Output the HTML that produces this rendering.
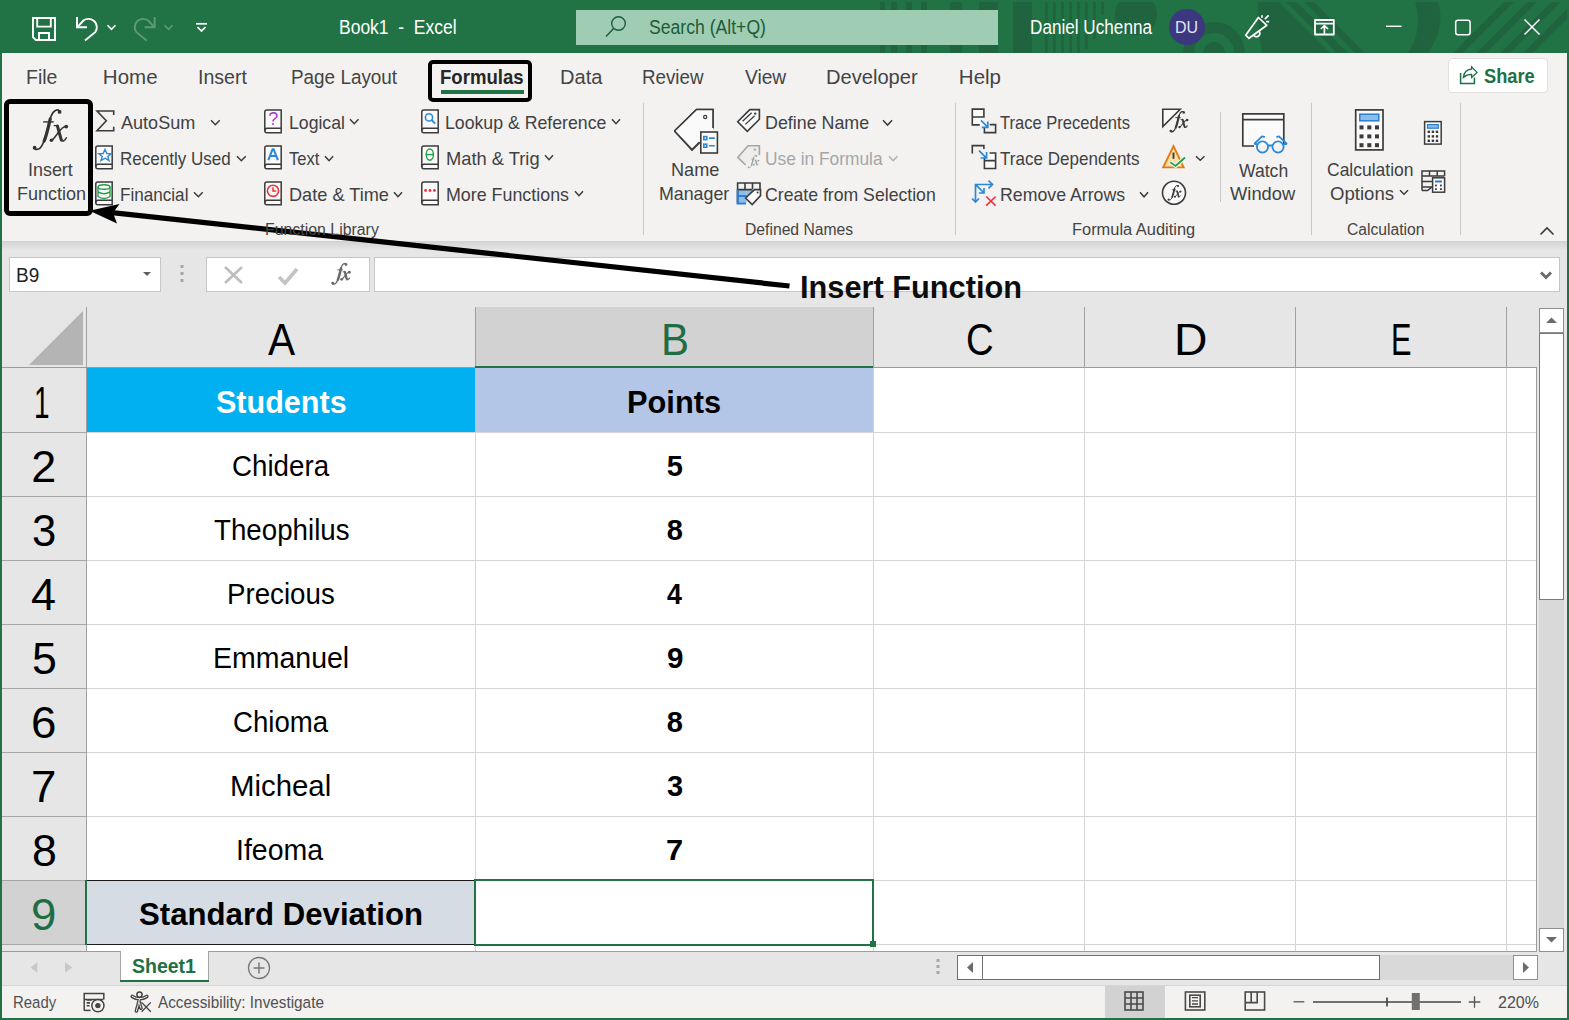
<!DOCTYPE html>
<html><head><meta charset="utf-8"><title>Excel</title><style>
html,body{margin:0;padding:0;width:1569px;height:1020px;overflow:hidden;background:#217346;position:relative}
.abs{position:absolute}
.t{position:absolute;white-space:pre;line-height:1;transform-origin:0 0}
</style></head>
<body>
<div class="abs" style="left:0;top:0;width:1569px;height:53px;background:#217346"></div>
<svg class="abs" style="left:0;top:0" width="1569" height="53" viewBox="0 0 1569 53">
<g fill="#20643f">
<rect x="880" y="2" width="5" height="51"/><rect x="891" y="2" width="6" height="51"/><rect x="906" y="2" width="6" height="51"/><rect x="921" y="2" width="6" height="51"/>
<rect x="950" y="2" width="12" height="51"/><rect x="979" y="2" width="19" height="51"/>
<rect x="1013" y="2" width="19" height="51"/>
<rect x="1045" y="2" width="2.7" height="51"/><rect x="1053" y="2" width="2.7" height="51"/><rect x="1061.2" y="2" width="2.7" height="51"/><rect x="1069.3" y="2" width="2.7" height="51"/><rect x="1077.1" y="2" width="2.7" height="51"/><rect x="1085" y="2" width="2.7" height="47"/><rect x="1093.2" y="2" width="2.7" height="37"/><rect x="1101.3" y="2" width="2.7" height="13"/>
<circle cx="1136" cy="14.5" r="21"/>
<path fill-rule="evenodd" d="M1183 53 A31 31 0 0 1 1245 53 Z M1194 53 A20 20 0 0 1 1234 53 Z"/><path d="M1203 53 A11 11 0 0 1 1225 53 Z"/>
<path d="M1258 2 L1279 2 L1330 53 L1262 53 Q1257 27 1258 2 Z" />
<path d="M1286 2 L1297 2 L1348 53 L1337 53 Z M1304 2 L1314 2 L1365 53 L1355 53 Z"/>
<path d="M1415 2 L1438 2 Q1446 27 1428 53 L1408 53 Q1424 27 1415 2 Z"/>
<path d="M1453 53 L1504 2 L1514 2 L1463 53 Z M1476 53 L1527 2 L1537 2 L1486 53 Z M1500 53 L1551 2 L1561 2 L1510 53 Z M1523 53 L1567 9 L1567 19 L1533 53 Z"/>
</g><rect x="0" y="0" width="1569" height="2" fill="#217346"/></svg>
<div class="abs" style="left:2px;top:53px;width:1565px;height:188px;background:#f3f2f1"></div>
<div class="abs" style="left:2px;top:241px;width:1565px;height:777px;background:#e6e6e6"></div>
<div class="abs" style="left:2px;top:241px;width:1565px;height:9px;background:linear-gradient(#d2d2d2,#e6e6e6)"></div>
<div class="abs" style="left:2px;top:985px;width:1565px;height:33px;background:#f3f2f1;border-top:1px solid #d6d6d6;box-sizing:border-box"></div>
<div class="abs" style="left:9px;top:257px;width:152px;height:35px;background:#fff;border:1px solid #c6c6c6;box-sizing:border-box"></div>
<svg class="abs" style="left:140px;top:270px" width="14" height="8"><path d="M3 2 L11 2 L7 6 Z" fill="#5f5f5f"/></svg>
<svg class="abs" style="left:178px;top:262px" width="8" height="24"><rect x="2.5" y="3" width="3" height="3" fill="#a6a6a6"/><rect x="2.5" y="10" width="3" height="3" fill="#a6a6a6"/><rect x="2.5" y="17" width="3" height="3" fill="#a6a6a6"/></svg>
<div class="abs" style="left:206px;top:257px;width:164px;height:35px;background:#fff;border:1px solid #c6c6c6;box-sizing:border-box"></div>
<div class="abs" style="left:374px;top:257px;width:1186px;height:35px;background:#fff;border:1px solid #c6c6c6;box-sizing:border-box"></div>
<svg class="abs" style="left:220px;top:262px" width="90" height="26"><path d="M5 5 L22 21 M22 5 L5 21" stroke="#bdbdbd" stroke-width="2.6" fill="none"/><path d="M59 15 L65 21 L77 7" stroke="#c4c4c4" stroke-width="3.6" fill="none"/></svg>
<svg class="abs" style="left:1536px;top:268px" width="20" height="16"><path d="M5 4.5 L10 9.5 L15 4.5" stroke="#6b6b6b" stroke-width="3" fill="none"/></svg>
<div class="abs" style="left:475px;top:307px;width:398px;height:61px;background:#d2d2d2"></div>
<svg class="abs" style="left:0;top:300px" width="90" height="70"><path d="M29 65 L83 11 L83 65 Z" fill="#b4b4b4"/></svg>
<div class="abs" style="left:86px;top:307px;width:1px;height:61px;background:#a0a0a0"></div>
<div class="abs" style="left:475px;top:307px;width:1px;height:61px;background:#a0a0a0"></div>
<div class="abs" style="left:873px;top:307px;width:1px;height:61px;background:#a0a0a0"></div>
<div class="abs" style="left:1084px;top:307px;width:1px;height:61px;background:#a0a0a0"></div>
<div class="abs" style="left:1295px;top:307px;width:1px;height:61px;background:#a0a0a0"></div>
<div class="abs" style="left:1506px;top:307px;width:1px;height:61px;background:#a0a0a0"></div>
<div class="abs" style="left:2px;top:367px;width:1535px;height:1px;background:#9c9c9c"></div>
<div class="abs" style="left:475px;top:366px;width:398px;height:2px;background:#217346"></div>
<div class="abs" style="left:87px;top:368px;width:1449px;height:583px;background:#fff"></div>
<div class="abs" style="left:87px;top:432px;width:1449px;height:1px;background:#d4d4d4"></div>
<div class="abs" style="left:2px;top:432px;width:84px;height:1px;background:#a6a6a6"></div>
<div class="abs" style="left:87px;top:496px;width:1449px;height:1px;background:#d4d4d4"></div>
<div class="abs" style="left:2px;top:496px;width:84px;height:1px;background:#a6a6a6"></div>
<div class="abs" style="left:87px;top:560px;width:1449px;height:1px;background:#d4d4d4"></div>
<div class="abs" style="left:2px;top:560px;width:84px;height:1px;background:#a6a6a6"></div>
<div class="abs" style="left:87px;top:624px;width:1449px;height:1px;background:#d4d4d4"></div>
<div class="abs" style="left:2px;top:624px;width:84px;height:1px;background:#a6a6a6"></div>
<div class="abs" style="left:87px;top:688px;width:1449px;height:1px;background:#d4d4d4"></div>
<div class="abs" style="left:2px;top:688px;width:84px;height:1px;background:#a6a6a6"></div>
<div class="abs" style="left:87px;top:752px;width:1449px;height:1px;background:#d4d4d4"></div>
<div class="abs" style="left:2px;top:752px;width:84px;height:1px;background:#a6a6a6"></div>
<div class="abs" style="left:87px;top:816px;width:1449px;height:1px;background:#d4d4d4"></div>
<div class="abs" style="left:2px;top:816px;width:84px;height:1px;background:#a6a6a6"></div>
<div class="abs" style="left:87px;top:880px;width:1449px;height:1px;background:#d4d4d4"></div>
<div class="abs" style="left:2px;top:880px;width:84px;height:1px;background:#a6a6a6"></div>
<div class="abs" style="left:87px;top:944px;width:1449px;height:1px;background:#d4d4d4"></div>
<div class="abs" style="left:2px;top:944px;width:84px;height:1px;background:#a6a6a6"></div>
<div class="abs" style="left:475px;top:368px;width:1px;height:583px;background:#d4d4d4"></div>
<div class="abs" style="left:873px;top:368px;width:1px;height:583px;background:#d4d4d4"></div>
<div class="abs" style="left:1084px;top:368px;width:1px;height:583px;background:#d4d4d4"></div>
<div class="abs" style="left:1295px;top:368px;width:1px;height:583px;background:#d4d4d4"></div>
<div class="abs" style="left:1506px;top:368px;width:1px;height:583px;background:#d4d4d4"></div>
<div class="abs" style="left:86px;top:368px;width:1px;height:583px;background:#a0a0a0"></div>
<div class="abs" style="left:1536px;top:368px;width:1px;height:583px;background:#9c9c9c"></div>
<div class="abs" style="left:2px;top:951px;width:1535px;height:1px;background:#9c9c9c"></div>
<div class="abs" style="left:87px;top:368px;width:388px;height:64px;background:#00b0f0"></div>
<div class="abs" style="left:475px;top:368px;width:398px;height:64px;background:#b4c6e7"></div>
<div class="abs" style="left:86px;top:880px;width:389px;height:65px;background:#d6dce4;border:1px solid #1a1a1a;box-sizing:border-box"></div>
<div class="abs" style="left:2px;top:881px;width:84px;height:63px;background:#d2d2d2"></div>
<div class="abs" style="left:85px;top:880px;width:2px;height:65px;background:#217346"></div>
<div class="abs" style="left:474px;top:879px;width:400px;height:67px;border:2px solid #217346;box-sizing:border-box"></div>
<div class="abs" style="left:870px;top:941px;width:6px;height:6px;background:#217346"></div>
<div class="abs" style="left:1539px;top:308px;width:25px;height:643px;background:#d9d9d9"></div>
<div class="abs" style="left:1539px;top:308px;width:25px;height:25px;background:#fff;border:1px solid #8f8f8f;box-sizing:border-box"></div>
<svg class="abs" style="left:1539px;top:308px" width="25" height="25"><path d="M7 15 L12.5 9.5 L18 15 Z" fill="#6b6b6b"/></svg>
<div class="abs" style="left:1539px;top:333px;width:25px;height:267px;background:#fff;border:1px solid #7a7a7a;box-sizing:border-box"></div>
<div class="abs" style="left:1539px;top:928px;width:25px;height:24px;background:#fff;border:1px solid #8f8f8f;box-sizing:border-box"></div>
<svg class="abs" style="left:1539px;top:928px" width="25" height="24"><path d="M7 9 L12.5 14.5 L18 9 Z" fill="#6b6b6b"/></svg>
<div class="abs" style="left:120px;top:951px;width:89px;height:31px;background:#fff;border-left:1px solid #a6a6a6;border-right:1px solid #a6a6a6;box-sizing:border-box"></div>
<div class="abs" style="left:120px;top:980px;width:89px;height:2px;background:#217346"></div>
<svg class="abs" style="left:0px;top:955px" width="90" height="24"><path d="M37.3 7.3 L30.6 12.5 L37.3 17.8 Z" fill="#c8c8c8"/><path d="M65 7.3 L72.3 12.5 L65 17.8 Z" fill="#c8c8c8"/></svg>
<svg class="abs" style="left:246px;top:955px" width="26" height="26"><circle cx="13" cy="13" r="10.5" stroke="#777" stroke-width="1.3" fill="none"/><path d="M13 7.5 V18.5 M7.5 13 H18.5" stroke="#777" stroke-width="1.5"/></svg>
<svg class="abs" style="left:934px;top:956px" width="10" height="22"><rect x="2.5" y="3" width="3" height="3" fill="#a6a6a6"/><rect x="2.5" y="9" width="3" height="3" fill="#a6a6a6"/><rect x="2.5" y="15" width="3" height="3" fill="#a6a6a6"/></svg>
<div class="abs" style="left:957px;top:955px;width:580px;height:25px;background:#d9d9d9"></div>
<div class="abs" style="left:957px;top:955px;width:26px;height:25px;background:#fff;border:1px solid #6f6f6f;box-sizing:border-box"></div>
<svg class="abs" style="left:957px;top:955px" width="26" height="25"><path d="M16 7 L10 12.5 L16 18 Z" fill="#6b6b6b"/></svg>
<div class="abs" style="left:982px;top:955px;width:398px;height:25px;background:#fff;border:1px solid #6f6f6f;box-sizing:border-box"></div>
<div class="abs" style="left:1513px;top:955px;width:25px;height:25px;background:#fff;border:1px solid #8f8f8f;box-sizing:border-box"></div>
<svg class="abs" style="left:1513px;top:955px" width="25" height="25"><path d="M10 7 L16 12.5 L10 18 Z" fill="#6b6b6b"/></svg>
<div class="abs" style="left:1105px;top:986px;width:60px;height:32px;background:#d2d2d2"></div>
<div class="abs" style="left:576px;top:10px;width:422px;height:35px;background:#9fcdb3"></div>
<svg class="abs" style="left:600px;top:12px" width="32" height="30"><circle cx="18.5" cy="11.5" r="6.8" stroke="#1d5c37" stroke-width="1.4" fill="none"/><path d="M13.6 16.4 L6 24.5" stroke="#1d5c37" stroke-width="1.5"/></svg>
<div class="abs" style="left:1169px;top:9px;width:36px;height:36px;border-radius:50%;background:#3b3880"></div>
<svg class="abs" style="left:0;top:0" width="260" height="53">
<g fill="none" stroke="#fff" stroke-width="1.9">
<path d="M33 18 H55 V40 H35.8 L33 37.2 Z"/>
<path d="M37.2 18 V26.6 H50.8 V18"/>
<path d="M39 40 V33 H49 V40"/>
<path d="M77 17 V27.2 H87"/>
<path d="M77.6 26.8 L83.4 20.5 A8.4 8.4 0 0 1 95.2 32.2 L85 40.6"/>
<path d="M107.5 25.3 L111.5 29.3 L115.5 25.3" stroke-width="1.6"/>
</g>
<g fill="none" stroke="#5f9a78" stroke-width="1.9">
<path d="M154.6 17 V27.2 H144.6"/>
<path d="M154 26.8 L148.2 20.5 A8.4 8.4 0 0 0 136.4 32.2 L146.6 40.6"/>
<path d="M164.5 25.3 L168.5 29.3 L172.5 25.3" stroke-width="1.6"/>
</g>
<g fill="none" stroke="#fff" stroke-width="1.7">
<path d="M196 23.8 H207"/>
<path d="M197.5 27 L201.5 31 L205.5 27"/>
</g>
</svg>
<svg class="abs" style="left:1230px;top:0" width="339" height="53">
<g fill="none" stroke="#fff" stroke-width="1.7" stroke-linejoin="round">
<path d="M28.4 17.5 L36.8 25.3 L19 38.3 L15.7 35.2 Z"/>
<path d="M23.6 35.3 A3.3 3.3 0 1 0 29.2 31.2"/>
<path d="M32 15.2 V17.8 M34.8 19.2 L38.6 15.3 M36.2 21.7 H39.2"/>
<rect x="85" y="20" width="18.8" height="14.5" stroke-width="1.8"/>
<path d="M85 23.6 H103.8 M94.4 34.5 V25.8 M90.8 29 L94.4 25.6 L98 29" stroke-width="1.7"/>
<path d="M156 26.3 H171.5" stroke-width="1.4"/>
<rect x="225.7" y="20.3" width="14.4" height="14.4" rx="2.2" stroke-width="1.5"/>
<path d="M294.5 19.5 L309.5 34.5 M309.5 19.5 L294.5 34.5" stroke-width="1.5"/>
</g></svg>
<div class="abs" style="left:428px;top:59.5px;width:104px;height:42px;border:4.5px solid #000;border-radius:5px;box-sizing:border-box"></div>
<div class="abs" style="left:441px;top:90px;width:83px;height:4px;background:#217346"></div>
<div class="abs" style="left:1447.5px;top:57.5px;width:100.5px;height:35px;border:1px solid #e1dfdd;border-radius:4px;background:#fff;box-sizing:border-box"></div>
<svg class="abs" style="left:1452px;top:60px" width="30" height="30" viewBox="1452 60 30 30"><g fill="none" stroke="#1e7145" stroke-width="1.5" stroke-linejoin="miter">
<path d="M1460.6 73 V83.4 H1474.4 V77.4"/>
<path d="M1477 72.4 L1471.6 66.8 V69 C1466.4 69.6 1463.8 73 1463.4 77.4 C1465.6 75.4 1468.2 74.4 1471.6 74.4 V77.4 Z" stroke-width="1.3"/></g></svg>
<div class="abs" style="left:3.5px;top:99px;width:89px;height:117px;border:5px solid #000;border-radius:6px;box-sizing:border-box"></div>
<svg class="abs" style="left:31.00px;top:107.00px" width="40.0" height="47.0" viewBox="0 0 40.0 47.0">
<g transform="translate(2,2) scale(1.0) translate(-33,-109)">
<g fill="none" stroke="#333" stroke-linecap="round">
<path d="M59.8 111.6 C58.5 108.4 53.5 109.6 51.2 116 C49 122 46.5 135 43.2 143 C41.2 148 38.2 150.2 35 149.2" stroke-width="1.70"/>
<path d="M50.2 119 C48.8 125 47 134 44.2 141" stroke-width="3.20"/>
<path d="M43.2 121.9 H53.7" stroke-width="1.40" stroke-linecap="butt"/>
<path d="M54.3 125.6 H57.6" stroke-width="1.40"/>
<path d="M57.4 126 C59 131 60 136 61.4 140" stroke-width="3.00"/>
<path d="M61.2 140.2 Q63.6 142.4 66.4 137.8" stroke-width="1.50"/>
<path d="M66.6 126.2 C63 126 60 130 57.2 134 C55 137 53.2 140 51.2 140.6" stroke-width="1.50"/>
</g>
<g fill="#333"><circle cx="59.6" cy="111.9" r="1.90"/><circle cx="34.6" cy="147.7" r="1.90"/><circle cx="66.2" cy="126.6" r="1.90"/><circle cx="51.4" cy="140.2" r="1.80"/></g>
</g></svg>
<div class="abs" style="left:643.0px;top:103px;width:1px;height:132px;background:#c8c6c4"></div>
<div class="abs" style="left:955.0px;top:103px;width:1px;height:132px;background:#c8c6c4"></div>
<div class="abs" style="left:1219.5px;top:112px;width:1px;height:90px;background:#c8c6c4"></div>
<div class="abs" style="left:1311.0px;top:103px;width:1px;height:132px;background:#c8c6c4"></div>
<div class="abs" style="left:1460.0px;top:103px;width:1px;height:132px;background:#c8c6c4"></div>
<svg class="abs" style="left:1536px;top:222px" width="22" height="16"><path d="M4.5 12.5 L11 6 L17.5 12.5" stroke="#3b3b3b" stroke-width="1.6" fill="none"/></svg>
<svg class="abs" style="left:208.8px;top:118px" width="12.699999999999989" height="9"><path d="M2 2.3 L6.349999999999994 6.7 L10.699999999999989 2.3" stroke="#3b3b3b" stroke-width="1.5" fill="none"/></svg>
<svg class="abs" style="left:234.8px;top:153.5px" width="12.699999999999989" height="9.0"><path d="M2 2.3 L6.349999999999994 6.7 L10.699999999999989 2.3" stroke="#3b3b3b" stroke-width="1.5" fill="none"/></svg>
<svg class="abs" style="left:192px;top:189.5px" width="12.699999999999989" height="9.0"><path d="M2 2.3 L6.349999999999994 6.7 L10.699999999999989 2.3" stroke="#3b3b3b" stroke-width="1.5" fill="none"/></svg>
<svg class="abs" style="left:348px;top:117px" width="12.5" height="9"><path d="M2 2.3 L6.25 6.7 L10.5 2.3" stroke="#3b3b3b" stroke-width="1.5" fill="none"/></svg>
<svg class="abs" style="left:323.4px;top:153.5px" width="12.100000000000023" height="9.0"><path d="M2 2.3 L6.050000000000011 6.7 L10.100000000000023 2.3" stroke="#3b3b3b" stroke-width="1.5" fill="none"/></svg>
<svg class="abs" style="left:392px;top:189.5px" width="12" height="9.0"><path d="M2 2.3 L6.0 6.7 L10 2.3" stroke="#3b3b3b" stroke-width="1.5" fill="none"/></svg>
<svg class="abs" style="left:610px;top:116.5px" width="12" height="9.0"><path d="M2 2.3 L6.0 6.7 L10 2.3" stroke="#3b3b3b" stroke-width="1.5" fill="none"/></svg>
<svg class="abs" style="left:543px;top:152.5px" width="12" height="9.0"><path d="M2 2.3 L6.0 6.7 L10 2.3" stroke="#3b3b3b" stroke-width="1.5" fill="none"/></svg>
<svg class="abs" style="left:573px;top:188.5px" width="12" height="9.0"><path d="M2 2.3 L6.0 6.7 L10 2.3" stroke="#3b3b3b" stroke-width="1.5" fill="none"/></svg>
<svg class="abs" style="left:880.9px;top:117.6px" width="13.100000000000023" height="9.400000000000006"><path d="M2 2.3 L6.550000000000011 7.100000000000006 L11.100000000000023 2.3" stroke="#3b3b3b" stroke-width="1.5" fill="none"/></svg>
<svg class="abs" style="left:1138.3px;top:189.8px" width="12.100000000000136" height="9.099999999999994"><path d="M2 2.3 L6.050000000000068 6.7999999999999945 L10.100000000000136 2.3" stroke="#3b3b3b" stroke-width="1.5" fill="none"/></svg>
<svg class="abs" style="left:1194px;top:154px" width="12.5" height="8.5"><path d="M2 2.3 L6.25 6.2 L10.5 2.3" stroke="#3b3b3b" stroke-width="1.5" fill="none"/></svg>
<svg class="abs" style="left:1398px;top:188px" width="12" height="8.5"><path d="M2 2.3 L6.0 6.2 L10 2.3" stroke="#3b3b3b" stroke-width="1.5" fill="none"/></svg>
<svg class="abs" style="left:887.2px;top:153.5px" width="12.399999999999977" height="9.0"><path d="M2 2.3 L6.199999999999989 6.7 L10.399999999999977 2.3" stroke="#b0b0b0" stroke-width="1.5" fill="none"/></svg>
<svg class="abs" style="left:94.2px;top:144.5px" width="20" height="25" viewBox="0 0 20 25">
<path d="M1.8 3 Q1.8 1 3.8 1 H18.2 V23.8 H3.8 Q1.8 23.8 1.8 21.8 Z" fill="#fafafa" stroke="#3b3b3b" stroke-width="1.5"/>
<path d="M1.8 21.8 Q1.8 19.3 3.8 19.3 H18.2" fill="none" stroke="#3b3b3b" stroke-width="1.5"/>
<path d="M11 4.5 L12.9 8.6 L17.2 8.7 L13.8 11.4 L15 15.6 L11 13.2 L7 15.6 L8.2 11.4 L4.8 8.7 L9.1 8.6 Z" fill="none" stroke="#2b88d8" stroke-width="1.4"/></svg>
<svg class="abs" style="left:94.2px;top:180.5px" width="20" height="25" viewBox="0 0 20 25">
<path d="M1.8 3 Q1.8 1 3.8 1 H18.2 V23.8 H3.8 Q1.8 23.8 1.8 21.8 Z" fill="#fafafa" stroke="#3b3b3b" stroke-width="1.5"/>
<path d="M1.8 21.8 Q1.8 19.3 3.8 19.3 H18.2" fill="none" stroke="#3b3b3b" stroke-width="1.5"/>
<ellipse cx="10" cy="6" rx="6" ry="2.3" fill="none" stroke="#21a045" stroke-width="1.4"/><path d="M4 6 V15.5 Q10 19.5 16 15.5 V6 M4 10.8 Q10 14.6 16 10.8" fill="none" stroke="#21a045" stroke-width="1.4"/></svg>
<svg class="abs" style="left:262.5px;top:108.5px" width="20" height="25" viewBox="0 0 20 25">
<path d="M1.8 3 Q1.8 1 3.8 1 H18.2 V23.8 H3.8 Q1.8 23.8 1.8 21.8 Z" fill="#fafafa" stroke="#3b3b3b" stroke-width="1.5"/>
<path d="M1.8 21.8 Q1.8 19.3 3.8 19.3 H18.2" fill="none" stroke="#3b3b3b" stroke-width="1.5"/>
<text x="10.2" y="15.6" font-family="Liberation Sans" font-size="18" fill="#a33cc6" text-anchor="middle">?</text></svg>
<svg class="abs" style="left:262.5px;top:144.5px" width="20" height="25" viewBox="0 0 20 25">
<path d="M1.8 3 Q1.8 1 3.8 1 H18.2 V23.8 H3.8 Q1.8 23.8 1.8 21.8 Z" fill="#fafafa" stroke="#3b3b3b" stroke-width="1.5"/>
<path d="M1.8 21.8 Q1.8 19.3 3.8 19.3 H18.2" fill="none" stroke="#3b3b3b" stroke-width="1.5"/>
<path d="M5.3 15.2 L9.6 4.2 H10.6 L14.9 15.2 M7 11 H13.2" fill="none" stroke="#2b88d8" stroke-width="2.1"/></svg>
<svg class="abs" style="left:262.5px;top:180.5px" width="20" height="25" viewBox="0 0 20 25">
<path d="M1.8 3 Q1.8 1 3.8 1 H18.2 V23.8 H3.8 Q1.8 23.8 1.8 21.8 Z" fill="#fafafa" stroke="#3b3b3b" stroke-width="1.5"/>
<path d="M1.8 21.8 Q1.8 19.3 3.8 19.3 H18.2" fill="none" stroke="#3b3b3b" stroke-width="1.5"/>
<circle cx="10" cy="9.8" r="5.6" fill="none" stroke="#e8343b" stroke-width="1.6"/><path d="M10 6.2 V10 H13.2" fill="none" stroke="#e8343b" stroke-width="1.5"/></svg>
<svg class="abs" style="left:419.5px;top:108.5px" width="20" height="25" viewBox="0 0 20 25">
<path d="M1.8 3 Q1.8 1 3.8 1 H18.2 V23.8 H3.8 Q1.8 23.8 1.8 21.8 Z" fill="#fafafa" stroke="#3b3b3b" stroke-width="1.5"/>
<path d="M1.8 21.8 Q1.8 19.3 3.8 19.3 H18.2" fill="none" stroke="#3b3b3b" stroke-width="1.5"/>
<circle cx="9" cy="8.4" r="3.6" fill="none" stroke="#2b88d8" stroke-width="1.6"/><path d="M11.6 11 L15.2 14.6" stroke="#2b88d8" stroke-width="1.8"/></svg>
<svg class="abs" style="left:419.5px;top:144.5px" width="20" height="25" viewBox="0 0 20 25">
<path d="M1.8 3 Q1.8 1 3.8 1 H18.2 V23.8 H3.8 Q1.8 23.8 1.8 21.8 Z" fill="#fafafa" stroke="#3b3b3b" stroke-width="1.5"/>
<path d="M1.8 21.8 Q1.8 19.3 3.8 19.3 H18.2" fill="none" stroke="#3b3b3b" stroke-width="1.5"/>
<ellipse cx="9.8" cy="9.6" rx="3.6" ry="5.6" fill="none" stroke="#21a045" stroke-width="1.4"/><path d="M6.2 9.6 H13.4" stroke="#21a045" stroke-width="1.4"/></svg>
<svg class="abs" style="left:419.5px;top:180.5px" width="20" height="25" viewBox="0 0 20 25">
<path d="M1.8 3 Q1.8 1 3.8 1 H18.2 V23.8 H3.8 Q1.8 23.8 1.8 21.8 Z" fill="#fafafa" stroke="#3b3b3b" stroke-width="1.5"/>
<path d="M1.8 21.8 Q1.8 19.3 3.8 19.3 H18.2" fill="none" stroke="#3b3b3b" stroke-width="1.5"/>
<circle cx="5.6" cy="9.5" r="1.4" fill="#e8343b"/><circle cx="10" cy="9.5" r="1.4" fill="#e8343b"/><circle cx="14.4" cy="9.5" r="1.4" fill="#e8343b"/></svg>
<svg class="abs" style="left:94px;top:108px" width="24" height="26"><path d="M19.7 7 V3 H3 L12.3 12.8 L3 22.7 H19.7 V18.8" fill="none" stroke="#3b3b3b" stroke-width="1.6"/></svg>
<svg class="abs" style="left:670px;top:106px" width="52" height="52" viewBox="670 106 52 52">
<path d="M674.5 131 L696.5 109.5 H713 V127.5 Q713 129.5 711 130 M700.5 142 L692 150 L674.5 131" fill="#fafafa" stroke="#3b3b3b" stroke-width="1.6" stroke-linejoin="miter"/>
<path d="M674.5 131 L696.5 109.5 H713 V131 H700.5 V142 L692 150 Z" fill="#fafafa" stroke="none"/>
<path d="M674.5 131 L696.5 109.5 H713 V128" fill="none" stroke="#3b3b3b" stroke-width="1.6"/>
<path d="M674.5 131 L692 149.5 L699.5 142" fill="none" stroke="#3b3b3b" stroke-width="1.6"/>
<circle cx="705.2" cy="117" r="1.6" fill="none" stroke="#3b3b3b" stroke-width="1.2"/>
<rect x="700.8" y="132" width="16.6" height="21" fill="#fafafa" stroke="#3b3b3b" stroke-width="1.6"/>
<rect x="703.8" y="136.6" width="3" height="3" fill="none" stroke="#2b88d8" stroke-width="1.6"/>
<rect x="703.8" y="144.2" width="3" height="3" fill="none" stroke="#2b88d8" stroke-width="1.6"/>
<path d="M709 138.1 H714.8 M709 145.7 H714.8" stroke="#2b88d8" stroke-width="1.6"/>
</svg>
<svg class="abs" style="left:734px;top:106px" width="30" height="28" viewBox="734 106 30 28">
<path d="M749.8 109.6 L759.4 109.6 L759.4 119.2 L747.3 131.3 L737.7 121.7 Z" fill="#fafafa" stroke="#3b3b3b" stroke-width="1.6" stroke-linejoin="miter"/>
<circle cx="755.2" cy="113.6" r="1.2" fill="#3b3b3b"/>
<path d="M742.6 121.2 L751.6 112.8 M745.4 124.4 L754.6 115.8" stroke="#3b3b3b" stroke-width="1.3"/>
</svg>
<svg class="abs" style="left:734px;top:142px" width="30" height="30" viewBox="734 142 30 30">
<path d="M745.6 165 L737.8 157.4 L748 145.7 H759.4 V155" fill="#ededed" stroke="#a6a6a6" stroke-width="1.6"/>
<circle cx="754.9" cy="149.6" r="1.2" fill="#a6a6a6"/>
</svg>
<svg class="abs" style="left:746.20px;top:153.40px" width="15.4" height="17.6" viewBox="0 0 15.4 17.6">
<g transform="translate(2,2) scale(0.317) translate(-33,-109)">
<g fill="none" stroke="#a6a6a6" stroke-linecap="round">
<path d="M59.8 111.6 C58.5 108.4 53.5 109.6 51.2 116 C49 122 46.5 135 43.2 143 C41.2 148 38.2 150.2 35 149.2" stroke-width="2.55"/>
<path d="M50.2 119 C48.8 125 47 134 44.2 141" stroke-width="4.80"/>
<path d="M43.2 121.9 H53.7" stroke-width="2.10" stroke-linecap="butt"/>
<path d="M54.3 125.6 H57.6" stroke-width="2.10"/>
<path d="M57.4 126 C59 131 60 136 61.4 140" stroke-width="4.50"/>
<path d="M61.2 140.2 Q63.6 142.4 66.4 137.8" stroke-width="2.25"/>
<path d="M66.6 126.2 C63 126 60 130 57.2 134 C55 137 53.2 140 51.2 140.6" stroke-width="2.25"/>
</g>
<g fill="#a6a6a6"><circle cx="59.6" cy="111.9" r="2.85"/><circle cx="34.6" cy="147.7" r="2.85"/><circle cx="66.2" cy="126.6" r="2.85"/><circle cx="51.4" cy="140.2" r="2.70"/></g>
</g></svg>
<svg class="abs" style="left:734px;top:178px" width="30" height="30" viewBox="734 178 30 30">
<rect x="737.6" y="190" width="9" height="12.6" fill="#8cbde9"/>
<rect x="746.6" y="190" width="7" height="6" fill="#8cbde9"/>
<path d="M737.6 203.5 V183 H760 V190 M737.6 189.6 H752 M737.6 196.2 H747 M745 183 V190 M752.5 183 V189.5" fill="none" stroke="#3b3b3b" stroke-width="1.6"/>
<path d="M737.6 189.6 V203.5 H746" fill="none" stroke="#2b7cd3" stroke-width="2"/>
<path d="M737.6 196.2 H746" stroke="#2b7cd3" stroke-width="1.6"/>
<path d="M745.6 198 L754.5 189.6 L760.5 189.6 L760.5 195.6 L752.2 204.5 Z" fill="#fafafa" stroke="#3b3b3b" stroke-width="1.6"/>
<circle cx="757.6" cy="192.5" r="1" fill="#3b3b3b"/>
</svg>
<svg class="abs" style="left:968px;top:106px" width="32" height="30" viewBox="968 106 32 30">
<rect x="972.3" y="109.1" width="11.6" height="15.8" fill="#fafafa"/>
<path d="M979.8 124.9 H972.3 V109.1 H983.9 V117 H972.3" fill="none" stroke="#3b3b3b" stroke-width="1.6"/>
<path d="M989.8 124.6 H995.6 V132.6 H984.4 V127" fill="none" stroke="#3b3b3b" stroke-width="1.6"/>
<path d="M981 120.4 L987.6 127 M987.8 121.4 V127.4 H981.8" fill="none" stroke="#2b88d8" stroke-width="1.7"/>
</svg>
<svg class="abs" style="left:968px;top:142px" width="32" height="30" viewBox="968 142 32 30">
<path d="M972.3 153.5 V145.6 H983.9 V149" fill="none" stroke="#3b3b3b" stroke-width="1.6"/>
<rect x="984.4" y="153" width="11.2" height="15.5" fill="#fafafa"/>
<path d="M989.6 153 H995.6 V168.5 H984.4 V157.6 M984.4 160.6 H995.6" fill="none" stroke="#3b3b3b" stroke-width="1.6"/>
<path d="M979 150.6 L986.4 157.8 M986.6 152 V158 H980.6" fill="none" stroke="#2b88d8" stroke-width="1.7"/>
</svg>
<svg class="abs" style="left:968px;top:178px" width="32" height="30" viewBox="968 178 32 30">
<path d="M975.5 202 V184.5 H992.5 M988.5 180.6 L992.5 184.5 L988.5 188.4 M972 198.5 L975.5 202 L979 198.5 M976.2 185.2 L984 193 M979 193 H984 V188" fill="none" stroke="#2b88d8" stroke-width="1.7"/>
<path d="M986.2 196.5 L995.6 205.6 M995.6 196.5 L986.2 205.6" stroke="#e8343b" stroke-width="1.6"/>
</svg>
<svg class="abs" style="left:1160px;top:106px" width="30" height="30" viewBox="1160 106 30 30">
<path d="M1162.8 109.3 H1180.2 L1162.8 126.6 Z" fill="#fafafa" stroke="#3b3b3b" stroke-width="1.6" stroke-linejoin="miter"/>
</svg>
<svg class="abs" style="left:1167.50px;top:109.00px" width="22.6" height="26.2" viewBox="0 0 22.6 26.2">
<g transform="translate(2,2) scale(0.517) translate(-33,-109)">
<g fill="none" stroke="#3b3b3b" stroke-linecap="round">
<path d="M59.8 111.6 C58.5 108.4 53.5 109.6 51.2 116 C49 122 46.5 135 43.2 143 C41.2 148 38.2 150.2 35 149.2" stroke-width="2.21"/>
<path d="M50.2 119 C48.8 125 47 134 44.2 141" stroke-width="4.16"/>
<path d="M43.2 121.9 H53.7" stroke-width="1.82" stroke-linecap="butt"/>
<path d="M54.3 125.6 H57.6" stroke-width="1.82"/>
<path d="M57.4 126 C59 131 60 136 61.4 140" stroke-width="3.90"/>
<path d="M61.2 140.2 Q63.6 142.4 66.4 137.8" stroke-width="1.95"/>
<path d="M66.6 126.2 C63 126 60 130 57.2 134 C55 137 53.2 140 51.2 140.6" stroke-width="1.95"/>
</g>
<g fill="#3b3b3b"><circle cx="59.6" cy="111.9" r="2.47"/><circle cx="34.6" cy="147.7" r="2.47"/><circle cx="66.2" cy="126.6" r="2.47"/><circle cx="51.4" cy="140.2" r="2.34"/></g>
</g></svg>
<svg class="abs" style="left:1160px;top:142px" width="30" height="30" viewBox="1160 142 30 30">
<path d="M1173.5 146.2 L1183.6 167.4 H1163.2 Z" fill="#fce0a8" stroke="#e07b10" stroke-width="1.9" stroke-linejoin="miter"/>
<path d="M1173.5 152.5 V158.8" stroke="#3b3b3b" stroke-width="1.9"/>
<path d="M1170.3 162.4 L1175.6 166 L1185 157.5" fill="none" stroke="#f3f2f1" stroke-width="4"/>
<path d="M1170.3 162.4 L1175.6 166 L1185 157.5" fill="none" stroke="#1f9a4a" stroke-width="1.7"/>
</svg>
<svg class="abs" style="left:1160px;top:178px" width="30" height="30" viewBox="1160 178 30 30">
<circle cx="1174" cy="192.7" r="11.5" fill="#fafafa" stroke="#3b3b3b" stroke-width="1.6"/>
</svg>
<svg class="abs" style="left:1165.50px;top:182.70px" width="17.5" height="20.2" viewBox="0 0 17.5 20.2">
<g transform="translate(2,2) scale(0.376) translate(-33,-109)">
<g fill="none" stroke="#3b3b3b" stroke-linecap="round">
<path d="M59.8 111.6 C58.5 108.4 53.5 109.6 51.2 116 C49 122 46.5 135 43.2 143 C41.2 148 38.2 150.2 35 149.2" stroke-width="2.55"/>
<path d="M50.2 119 C48.8 125 47 134 44.2 141" stroke-width="4.80"/>
<path d="M43.2 121.9 H53.7" stroke-width="2.10" stroke-linecap="butt"/>
<path d="M54.3 125.6 H57.6" stroke-width="2.10"/>
<path d="M57.4 126 C59 131 60 136 61.4 140" stroke-width="4.50"/>
<path d="M61.2 140.2 Q63.6 142.4 66.4 137.8" stroke-width="2.25"/>
<path d="M66.6 126.2 C63 126 60 130 57.2 134 C55 137 53.2 140 51.2 140.6" stroke-width="2.25"/>
</g>
<g fill="#3b3b3b"><circle cx="59.6" cy="111.9" r="2.85"/><circle cx="34.6" cy="147.7" r="2.85"/><circle cx="66.2" cy="126.6" r="2.85"/><circle cx="51.4" cy="140.2" r="2.70"/></g>
</g></svg>
<svg class="abs" style="left:1238px;top:108px" width="52" height="50" viewBox="1238 108 52 50">
<path d="M1254 146 H1242.8 V113.8 H1283.8 V144" fill="#fafafa" stroke="#3b3b3b" stroke-width="1.7"/>
<path d="M1242.8 119.6 H1283.8" stroke="#3b3b3b" stroke-width="1.7"/>
<g fill="none" stroke="#2b88d8" stroke-width="1.8">
<circle cx="1262.5" cy="147" r="5.6"/><circle cx="1278" cy="147" r="5.6"/>
<path d="M1267.8 145.5 H1272.7 M1254.2 144 L1262 136.4 L1264.8 137 M1287 144 L1279 136.4 L1276.4 137 M1254.2 144 H1256.9 M1287 144 H1283.6"/>
</g></svg>
<svg class="abs" style="left:1352px;top:106px" width="36" height="48" viewBox="1352 106 36 48">
<rect x="1355.7" y="109.9" width="27.3" height="40" fill="#fafafa" stroke="#3b3b3b" stroke-width="1.7"/>
<rect x="1359.8" y="114.2" width="19" height="6.6" fill="#8cbde9" stroke="#2b7cd3" stroke-width="1.5"/>
<g fill="#3b3b3b">
<rect x="1359.5" y="125.4" width="4" height="4"/><rect x="1367.3" y="125.4" width="4" height="4"/><rect x="1375" y="125.4" width="4" height="4"/>
<rect x="1359.5" y="134.4" width="4" height="4"/><rect x="1367.3" y="134.4" width="4" height="4"/><rect x="1375" y="134.4" width="4" height="4"/>
<rect x="1359.5" y="143.2" width="4" height="4"/><rect x="1367.3" y="143.2" width="4" height="4"/><rect x="1375" y="143.2" width="4" height="4"/>
</g></svg>
<svg class="abs" style="left:1421px;top:118px" width="24" height="30" viewBox="1421 118 24 30">
<rect x="1424.6" y="121.6" width="16.6" height="22.5" fill="#fafafa" stroke="#3b3b3b" stroke-width="1.5"/>
<rect x="1427.5" y="124.6" width="10.8" height="3.6" fill="#8cbde9" stroke="#2b7cd3" stroke-width="1.2"/>
<g fill="#3b3b3b">
<rect x="1427.6" y="130.6" width="2.4" height="2.4"/><rect x="1431.7" y="130.6" width="2.4" height="2.4"/><rect x="1435.8" y="130.6" width="2.4" height="2.4"/>
<rect x="1427.6" y="135.2" width="2.4" height="2.4"/><rect x="1431.7" y="135.2" width="2.4" height="2.4"/><rect x="1435.8" y="135.2" width="2.4" height="2.4"/>
<rect x="1427.6" y="139.6" width="2.4" height="2.4"/><rect x="1431.7" y="139.6" width="2.4" height="2.4"/><rect x="1435.8" y="139.6" width="2.4" height="2.4"/>
</g></svg>
<svg class="abs" style="left:1418px;top:167px" width="30" height="30" viewBox="1418 167 30 30">
<path d="M1422 190.5 V171 H1444.6 V176 M1422 176 H1444.6 M1422 181.5 H1432 M1422 187 H1432 M1429.5 171 V176 M1437.2 171 V176 M1422 190.5 H1427.6 L1432 187" fill="none" stroke="#3b3b3b" stroke-width="1.5"/>
<rect x="1432.6" y="177.8" width="12" height="14.4" fill="#fafafa" stroke="#3b3b3b" stroke-width="1.5"/>
<rect x="1435" y="180.5" width="7" height="2" fill="#2b7cd3"/>
<g fill="#3b3b3b"><rect x="1435" y="184.6" width="1.8" height="1.8"/><rect x="1440" y="184.6" width="1.8" height="1.8"/><rect x="1435" y="188.2" width="1.8" height="1.8"/><rect x="1440" y="188.2" width="1.8" height="1.8"/></g>
</svg>
<svg class="abs" style="left:329.90px;top:261.00px" width="22.9" height="26.5" viewBox="0 0 22.9 26.5">
<g transform="translate(2,2) scale(0.524) translate(-33,-109)">
<g fill="none" stroke="#6b6b6b" stroke-linecap="round">
<path d="M59.8 111.6 C58.5 108.4 53.5 109.6 51.2 116 C49 122 46.5 135 43.2 143 C41.2 148 38.2 150.2 35 149.2" stroke-width="2.46"/>
<path d="M50.2 119 C48.8 125 47 134 44.2 141" stroke-width="4.64"/>
<path d="M43.2 121.9 H53.7" stroke-width="2.03" stroke-linecap="butt"/>
<path d="M54.3 125.6 H57.6" stroke-width="2.03"/>
<path d="M57.4 126 C59 131 60 136 61.4 140" stroke-width="4.35"/>
<path d="M61.2 140.2 Q63.6 142.4 66.4 137.8" stroke-width="2.17"/>
<path d="M66.6 126.2 C63 126 60 130 57.2 134 C55 137 53.2 140 51.2 140.6" stroke-width="2.17"/>
</g>
<g fill="#6b6b6b"><circle cx="59.6" cy="111.9" r="2.75"/><circle cx="34.6" cy="147.7" r="2.75"/><circle cx="66.2" cy="126.6" r="2.75"/><circle cx="51.4" cy="140.2" r="2.61"/></g>
</g></svg>
<svg class="abs" style="left:0;top:0" width="1569" height="1020" viewBox="0 0 1569 1020">
<path d="M112 212.6 L789.5 286" stroke="#000" stroke-width="5.2" fill="none"/>
<path d="M89.5 210.8 L119.5 204 L113 212.8 L117 223.5 Z" fill="#000"/>
</svg>
<svg class="abs" style="left:80px;top:988px" width="28" height="28" viewBox="80 988 28 28">
<g fill="none" stroke="#444" stroke-width="1.5">
<path d="M84.2 1010.4 V993.4 H103.8 V999.6 M84.2 999.6 H103.2"/>
<path d="M84.2 1010.4 H90.6"/>
<path d="M86.6 999.9 H91.6 M86.6 1002.9 H90 M86.6 1005.7 H89.6" stroke-width="1.6"/>
</g>
<circle cx="97.9" cy="1005.6" r="6.1" fill="#f3f2f1" stroke="#444" stroke-width="1.5"/>
<circle cx="97.9" cy="1005.6" r="2.7" fill="#444"/>
</svg>
<svg class="abs" style="left:126px;top:988px" width="30" height="28" viewBox="126 988 30 28">
<g fill="none" stroke-linecap="round" stroke-linejoin="round">
<path d="M132.2 996.4 Q135.5 998.6 139.5 998.8 Q143.5 998.6 146.8 996.4 M139.5 998.8 Q138.4 1004 136.4 1011 M139.5 1002.8 Q140 1006 141 1008.2" stroke="#444" stroke-width="3.6"/>
<path d="M132.2 996.4 Q135.5 998.6 139.5 998.8 Q143.5 998.6 146.8 996.4 M139.5 998.8 Q138.4 1004 136.4 1011 M139.5 1002.8 Q140 1006 141 1008.2" stroke="#f3f2f1" stroke-width="1.0"/>
<circle cx="139.5" cy="994.6" r="2.6" stroke="#444" stroke-width="1.5"/>
<path d="M141.6 1002.4 L150.8 1011.8 M150.8 1002.4 L141.6 1011.8" stroke="#444" stroke-width="1.3" stroke-linecap="butt"/>
</g></svg>
<svg class="abs" style="left:1120px;top:986px" width="170" height="30" viewBox="1120 986 170 30">
<g fill="none" stroke="#4a4a4a" stroke-width="1.6">
<rect x="1125" y="992" width="18" height="18"/><path d="M1125 998 H1143 M1125 1004 H1143 M1131 992 V1010 M1137 992 V1010"/>
<rect x="1185.4" y="992" width="19.4" height="18"/><rect x="1189.8" y="995.2" width="10.4" height="11.6"/><path d="M1192 997.6 H1198 M1192 1000.8 H1198 M1192 1004 H1198" stroke-width="1.3"/>
<rect x="1245.2" y="992" width="19.4" height="18"/><path d="M1245.2 1002.6 H1257.2 V992 M1251.2 992 V1002.6"/>
</g></svg>
<svg class="abs" style="left:1290px;top:990px" width="200" height="24" viewBox="1290 990 200 24">
<path d="M1293.5 1001.8 H1304.3" stroke="#555" stroke-width="1.3"/>
<path d="M1313 1002 H1461" stroke="#444" stroke-width="1.7"/>
<path d="M1387 997.5 V1006.5" stroke="#444" stroke-width="1.7"/>
<rect x="1411.8" y="993" width="8" height="17" fill="#707070"/>
<path d="M1468.8 1002 H1480.3 M1474.5 996.3 V1007.7" stroke="#555" stroke-width="1.3"/>
</svg>
<span class="t" style="left:339.00px;top:17.89px;font-size:19.3px;font-weight:400;color:#ffffff;font-family:'Liberation Sans';font-style:normal;transform:scaleX(0.9071);">Book1  -  Excel</span>
<span class="t" style="left:649.12px;top:18.22px;font-size:19.5px;font-weight:400;color:#1d5c37;font-family:'Liberation Sans';font-style:normal;transform:scaleX(0.9031);">Search (Alt+Q)</span>
<span class="t" style="left:1030.33px;top:18.09px;font-size:19.3px;font-weight:400;color:#ffffff;font-family:'Liberation Sans';font-style:normal;transform:scaleX(0.8891);">Daniel Uchenna</span>
<span class="t" style="left:1175.12px;top:19.21px;font-size:17.4px;font-weight:400;color:#e4e4f4;font-family:'Liberation Sans';font-style:normal;transform:scaleX(0.9178);">DU</span>
<span class="t" style="left:26.44px;top:66.58px;font-size:20.5px;font-weight:400;color:#444444;font-family:'Liberation Sans';font-style:normal;transform:scaleX(0.9494);">File</span>
<span class="t" style="left:102.86px;top:66.58px;font-size:20.5px;font-weight:400;color:#444444;font-family:'Liberation Sans';font-style:normal;">Home</span>
<span class="t" style="left:198.24px;top:66.58px;font-size:20.5px;font-weight:400;color:#444444;font-family:'Liberation Sans';font-style:normal;transform:scaleX(0.9553);">Insert</span>
<span class="t" style="left:290.99px;top:66.58px;font-size:20.5px;font-weight:400;color:#444444;font-family:'Liberation Sans';font-style:normal;transform:scaleX(0.9218);">Page Layout</span>
<span class="t" style="left:560.40px;top:66.58px;font-size:20.5px;font-weight:400;color:#444444;font-family:'Liberation Sans';font-style:normal;transform:scaleX(0.9780);">Data</span>
<span class="t" style="left:641.50px;top:66.58px;font-size:20.5px;font-weight:400;color:#444444;font-family:'Liberation Sans';font-style:normal;transform:scaleX(0.9146);">Review</span>
<span class="t" style="left:744.81px;top:66.58px;font-size:20.5px;font-weight:400;color:#444444;font-family:'Liberation Sans';font-style:normal;transform:scaleX(0.9346);">View</span>
<span class="t" style="left:826.39px;top:66.58px;font-size:20.5px;font-weight:400;color:#444444;font-family:'Liberation Sans';font-style:normal;transform:scaleX(0.9811);">Developer</span>
<span class="t" style="left:958.86px;top:66.58px;font-size:20.5px;font-weight:400;color:#444444;font-family:'Liberation Sans';font-style:normal;">Help</span>
<span class="t" style="left:439.70px;top:66.58px;font-size:20.5px;font-weight:700;color:#262626;font-family:'Liberation Sans';font-style:normal;transform:scaleX(0.9056);">Formulas</span>
<span class="t" style="left:1483.95px;top:65.35px;font-size:21px;font-weight:700;color:#1e7145;font-family:'Liberation Sans';font-style:normal;transform:scaleX(0.8698);">Share</span>
<span class="t" style="left:121.40px;top:112.85px;font-size:19px;font-weight:400;color:#414141;font-family:'Liberation Sans';font-style:normal;transform:scaleX(0.9500);">AutoSum</span>
<span class="t" style="left:120.14px;top:148.85px;font-size:19px;font-weight:400;color:#414141;font-family:'Liberation Sans';font-style:normal;transform:scaleX(0.8962);">Recently Used</span>
<span class="t" style="left:120.13px;top:184.85px;font-size:19px;font-weight:400;color:#414141;font-family:'Liberation Sans';font-style:normal;transform:scaleX(0.8999);">Financial</span>
<span class="t" style="left:288.59px;top:112.85px;font-size:19px;font-weight:400;color:#414141;font-family:'Liberation Sans';font-style:normal;transform:scaleX(0.9289);">Logical</span>
<span class="t" style="left:288.67px;top:148.85px;font-size:19px;font-weight:400;color:#414141;font-family:'Liberation Sans';font-style:normal;transform:scaleX(0.8723);">Text</span>
<span class="t" style="left:288.55px;top:184.85px;font-size:19px;font-weight:400;color:#414141;font-family:'Liberation Sans';font-style:normal;transform:scaleX(0.9558);">Date &amp; Time</span>
<span class="t" style="left:445.38px;top:112.85px;font-size:19px;font-weight:400;color:#414141;font-family:'Liberation Sans';font-style:normal;transform:scaleX(0.9314);">Lookup &amp; Reference</span>
<span class="t" style="left:445.54px;top:148.85px;font-size:19px;font-weight:400;color:#414141;font-family:'Liberation Sans';font-style:normal;transform:scaleX(0.9637);">Math &amp; Trig</span>
<span class="t" style="left:445.57px;top:184.85px;font-size:19px;font-weight:400;color:#414141;font-family:'Liberation Sans';font-style:normal;transform:scaleX(0.9393);">More Functions</span>
<span class="t" style="left:28.39px;top:159.85px;font-size:19px;font-weight:400;color:#414141;font-family:'Liberation Sans';font-style:normal;transform:scaleX(0.9430);">Insert</span>
<span class="t" style="left:16.56px;top:183.85px;font-size:19px;font-weight:400;color:#414141;font-family:'Liberation Sans';font-style:normal;transform:scaleX(0.9485);">Function</span>
<span class="t" style="left:670.55px;top:160.35px;font-size:19px;font-weight:400;color:#414141;font-family:'Liberation Sans';font-style:normal;transform:scaleX(0.9532);">Name</span>
<span class="t" style="left:658.78px;top:184.25px;font-size:19px;font-weight:400;color:#414141;font-family:'Liberation Sans';font-style:normal;transform:scaleX(0.9364);">Manager</span>
<span class="t" style="left:764.77px;top:113.05px;font-size:19px;font-weight:400;color:#414141;font-family:'Liberation Sans';font-style:normal;transform:scaleX(0.9393);">Define Name</span>
<span class="t" style="left:765.12px;top:184.85px;font-size:19px;font-weight:400;color:#414141;font-family:'Liberation Sans';font-style:normal;transform:scaleX(0.9293);">Create from Selection</span>
<span class="t" style="left:1000.07px;top:112.85px;font-size:19px;font-weight:400;color:#414141;font-family:'Liberation Sans';font-style:normal;transform:scaleX(0.8704);">Trace Precedents</span>
<span class="t" style="left:1000.06px;top:148.85px;font-size:19px;font-weight:400;color:#414141;font-family:'Liberation Sans';font-style:normal;transform:scaleX(0.8973);">Trace Dependents</span>
<span class="t" style="left:999.58px;top:185.35px;font-size:19px;font-weight:400;color:#414141;font-family:'Liberation Sans';font-style:normal;transform:scaleX(0.9328);">Remove Arrows</span>
<span class="t" style="left:1239.42px;top:160.55px;font-size:19px;font-weight:400;color:#414141;font-family:'Liberation Sans';font-style:normal;transform:scaleX(0.9249);">Watch</span>
<span class="t" style="left:1230.32px;top:184.35px;font-size:19px;font-weight:400;color:#414141;font-family:'Liberation Sans';font-style:normal;transform:scaleX(0.9652);">Window</span>
<span class="t" style="left:1326.93px;top:160.15px;font-size:19px;font-weight:400;color:#414141;font-family:'Liberation Sans';font-style:normal;transform:scaleX(0.9208);">Calculation</span>
<span class="t" style="left:1329.67px;top:184.25px;font-size:19px;font-weight:400;color:#414141;font-family:'Liberation Sans';font-style:normal;transform:scaleX(0.9774);">Options</span>
<span class="t" style="left:764.61px;top:148.85px;font-size:19px;font-weight:400;color:#a6a6a6;font-family:'Liberation Sans';font-style:normal;transform:scaleX(0.9128);">Use in Formula</span>
<span class="t" style="left:264.73px;top:222.47px;font-size:15.8px;font-weight:400;color:#444444;font-family:'Liberation Sans';font-style:normal;transform:scaleX(1.0052);">Function Library</span>
<span class="t" style="left:745.14px;top:221.77px;font-size:15.8px;font-weight:400;color:#444444;font-family:'Liberation Sans';font-style:normal;transform:scaleX(0.9932);">Defined Names</span>
<span class="t" style="left:1071.69px;top:221.77px;font-size:15.8px;font-weight:400;color:#444444;font-family:'Liberation Sans';font-style:normal;transform:scaleX(1.0388);">Formula Auditing</span>
<span class="t" style="left:1346.82px;top:222.07px;font-size:15.8px;font-weight:400;color:#444444;font-family:'Liberation Sans';font-style:normal;transform:scaleX(0.9906);">Calculation</span>
<span class="t" style="left:15.78px;top:265.53px;font-size:19.5px;font-weight:400;color:#222222;font-family:'Liberation Sans';font-style:normal;transform:scaleX(0.9744);">B9</span>
<span class="t" style="left:800.05px;top:271.68px;font-size:30.5px;font-weight:700;color:#0d0d0d;font-family:'Liberation Sans';font-style:normal;transform:scaleX(1.0081);">Insert Function</span>
<span class="t" style="left:267.70px;top:317.05px;font-size:45px;font-weight:400;color:#000000;font-family:'Liberation Sans';font-style:normal;transform:scaleX(0.9024);">A</span>
<span class="t" style="left:660.63px;top:317.05px;font-size:45px;font-weight:400;color:#1f6e43;font-family:'Liberation Sans';font-style:normal;transform:scaleX(0.9350);">B</span>
<span class="t" style="left:965.69px;top:317.05px;font-size:45px;font-weight:400;color:#000000;font-family:'Liberation Sans';font-style:normal;transform:scaleX(0.8501);">C</span>
<span class="t" style="left:1173.90px;top:317.05px;font-size:45px;font-weight:400;color:#000000;font-family:'Liberation Sans';font-style:normal;transform:scaleX(1.0282);">D</span>
<span class="t" style="left:1391.44px;top:317.05px;font-size:45px;font-weight:400;color:#000000;font-family:'Liberation Sans';font-style:normal;transform:scaleX(0.6831);">E</span>
<span class="t" style="left:34.27px;top:380.25px;font-size:45px;font-weight:400;color:#000000;font-family:'Liberation Sans';font-style:normal;transform:scaleX(0.6202);">1</span>
<span class="t" style="left:31.25px;top:444.25px;font-size:45px;font-weight:400;color:#000000;font-family:'Liberation Sans';font-style:normal;">2</span>
<span class="t" style="left:31.76px;top:508.25px;font-size:45px;font-weight:400;color:#000000;font-family:'Liberation Sans';font-style:normal;transform:scaleX(0.9693);">3</span>
<span class="t" style="left:31.00px;top:572.25px;font-size:45px;font-weight:400;color:#000000;font-family:'Liberation Sans';font-style:normal;">4</span>
<span class="t" style="left:31.71px;top:636.25px;font-size:45px;font-weight:400;color:#000000;font-family:'Liberation Sans';font-style:normal;transform:scaleX(0.9929);">5</span>
<span class="t" style="left:31.22px;top:700.25px;font-size:45px;font-weight:400;color:#000000;font-family:'Liberation Sans';font-style:normal;transform:scaleX(1.0145);">6</span>
<span class="t" style="left:31.22px;top:764.25px;font-size:45px;font-weight:400;color:#000000;font-family:'Liberation Sans';font-style:normal;transform:scaleX(1.0145);">7</span>
<span class="t" style="left:31.71px;top:828.25px;font-size:45px;font-weight:400;color:#000000;font-family:'Liberation Sans';font-style:normal;transform:scaleX(0.9929);">8</span>
<span class="t" style="left:31.22px;top:892.25px;font-size:45px;font-weight:400;color:#1f6e43;font-family:'Liberation Sans';font-style:normal;transform:scaleX(1.0145);">9</span>
<span class="t" style="left:215.68px;top:386.00px;font-size:32px;font-weight:700;color:#ffffff;font-family:'Liberation Sans';font-style:normal;transform:scaleX(0.9546);">Students</span>
<span class="t" style="left:627.45px;top:385.80px;font-size:32px;font-weight:700;color:#000000;font-family:'Liberation Sans';font-style:normal;transform:scaleX(0.9619);">Points</span>
<span class="t" style="left:231.61px;top:451.85px;font-size:29px;font-weight:400;color:#000000;font-family:'Liberation Sans';font-style:normal;transform:scaleX(0.9555);">Chidera</span>
<span class="t" style="left:666.63px;top:452.15px;font-size:29px;font-weight:700;color:#000000;font-family:'Liberation Sans';font-style:normal;">5</span>
<span class="t" style="left:213.65px;top:515.85px;font-size:29px;font-weight:400;color:#000000;font-family:'Liberation Sans';font-style:normal;transform:scaleX(0.9554);">Theophilus</span>
<span class="t" style="left:666.63px;top:516.15px;font-size:29px;font-weight:700;color:#000000;font-family:'Liberation Sans';font-style:normal;">8</span>
<span class="t" style="left:226.78px;top:579.85px;font-size:29px;font-weight:400;color:#000000;font-family:'Liberation Sans';font-style:normal;transform:scaleX(0.9549);">Precious</span>
<span class="t" style="left:667.23px;top:580.15px;font-size:29px;font-weight:700;color:#000000;font-family:'Liberation Sans';font-style:normal;transform:scaleX(0.9259);">4</span>
<span class="t" style="left:213.02px;top:643.85px;font-size:29px;font-weight:400;color:#000000;font-family:'Liberation Sans';font-style:normal;transform:scaleX(0.9823);">Emmanuel</span>
<span class="t" style="left:666.61px;top:644.15px;font-size:29px;font-weight:700;color:#000000;font-family:'Liberation Sans';font-style:normal;transform:scaleX(1.0204);">9</span>
<span class="t" style="left:232.62px;top:707.85px;font-size:29px;font-weight:400;color:#000000;font-family:'Liberation Sans';font-style:normal;transform:scaleX(0.9513);">Chioma</span>
<span class="t" style="left:666.63px;top:708.15px;font-size:29px;font-weight:700;color:#000000;font-family:'Liberation Sans';font-style:normal;">8</span>
<span class="t" style="left:230.45px;top:771.85px;font-size:29px;font-weight:400;color:#000000;font-family:'Liberation Sans';font-style:normal;transform:scaleX(1.0125);">Micheal</span>
<span class="t" style="left:666.92px;top:772.15px;font-size:29px;font-weight:700;color:#000000;font-family:'Liberation Sans';font-style:normal;">3</span>
<span class="t" style="left:235.84px;top:835.85px;font-size:29px;font-weight:400;color:#000000;font-family:'Liberation Sans';font-style:normal;transform:scaleX(0.9822);">Ifeoma</span>
<span class="t" style="left:666.27px;top:836.15px;font-size:29px;font-weight:700;color:#000000;font-family:'Liberation Sans';font-style:normal;transform:scaleX(1.0638);">7</span>
<span class="t" style="left:139.27px;top:897.70px;font-size:32px;font-weight:700;color:#000000;font-family:'Liberation Sans';font-style:normal;transform:scaleX(0.9739);">Standard Deviation</span>
<span class="t" style="left:131.72px;top:955.80px;font-size:20px;font-weight:700;color:#1e7145;font-family:'Liberation Sans';font-style:normal;transform:scaleX(0.9736);">Sheet1</span>
<span class="t" style="left:12.60px;top:994.80px;font-size:16.7px;font-weight:400;color:#505050;font-family:'Liberation Sans';font-style:normal;transform:scaleX(0.8950);">Ready</span>
<span class="t" style="left:157.70px;top:994.80px;font-size:16.7px;font-weight:400;color:#505050;font-family:'Liberation Sans';font-style:normal;transform:scaleX(0.9173);">Accessibility: Investigate</span>
<span class="t" style="left:1498.20px;top:994.60px;font-size:16.7px;font-weight:400;color:#505050;font-family:'Liberation Sans';font-style:normal;transform:scaleX(0.9600);">220%</span>
</body></html>
